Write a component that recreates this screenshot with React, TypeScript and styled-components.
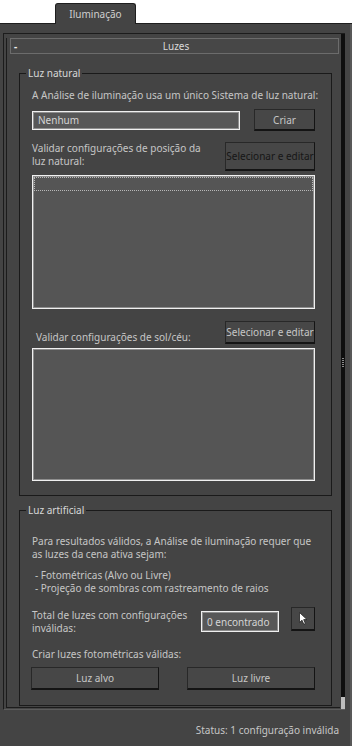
import styled, { createGlobalStyle } from "styled-components";

const GlobalStyle = createGlobalStyle`
  html, body {
    margin: 0;
    padding: 0;
    background: #ffffff;
  }
  body {
    font-family: "Noto Sans", "Liberation Sans", sans-serif;
    font-size: 10px;
    color: #c6c6c6;
  }
  * {
    box-sizing: border-box;
  }
`;

const Page = styled.div`
  width: 352px;
  height: 746px;
  display: flex;
  flex-direction: column;
  overflow: hidden;
`;

const TabStrip = styled.div`
  height: 24px;
  padding: 3px 0 0 55px;
  background: #ffffff;
  border-bottom: 1px solid #1e1e1e;
  display: flex;
`;

const Tab = styled.div`
  width: 81px;
  height: 21px;
  margin-bottom: -1px;
  background: #444444;
  border: 1px solid #1e1e1e;
  border-bottom: none;
  border-radius: 3px 3px 0 0;
  display: flex;
  align-items: center;
  justify-content: center;
  color: #cfcfcf;
`;

const Panel = styled.div`
  flex: 1;
  background: #444444;
  border-right: 2px solid #585858;
  display: flex;
  flex-direction: column;
`;

const RolloutArea = styled.div`
  height: 677px;
  margin: 9px 5px 0 3px;
  border-top: 1px solid #1c1c1c;
  border-left: 1px solid #1c1c1c;
  border-bottom: 1px solid #5c5c5c;
  display: flex;
`;

const RolloutColumn = styled.div`
  flex: 1;
  padding: 4px 1px 1px 2px;
  display: flex;
  flex-direction: column;
`;

const Rollout = styled.div`
  flex: 1;
  border-left: 1px solid #1c1c1c;
  border-bottom: 1px solid #1c1c1c;
  display: flex;
  flex-direction: column;
`;

const RolloutHeader = styled.div`
  height: 16px;
  margin: 0 1px 0 3px;
  background: #474747;
  border: 1px solid #6c6c6c;
  display: grid;
  grid-template-columns: 1fr auto 1fr;
  align-items: center;
  padding-left: 3px;
  color: #dadada;
  line-height: 13px;
`;

const Collapse = styled.span`
  color: #f0f0f0;
  font-weight: bold;
`;

const ScrollStrip = styled.div`
  width: 4px;
  background: #0e0e0e;
  display: flex;
  flex-direction: column;
  align-items: center;
`;

const Grip = styled.div`
  margin-top: 324px;
  width: 2px;
  height: 9px;
  background: repeating-linear-gradient(
    to bottom,
    #8a8a8a 0,
    #8a8a8a 1px,
    transparent 1px,
    transparent 2px
  );
`;

const Thumb = styled.div`
  margin-top: auto;
  width: 4px;
  height: 12px;
  background: #bdbdbd;
`;

const Group = styled.div<{ $top: number; $bottom: number }>`
  margin: ${(p) => p.$top}px 0 0 12px;
  width: 313px;
  border: 1px solid #1a1a1a;
  padding: 0 16px ${(p) => p.$bottom}px 12px;
  display: flex;
  flex-direction: column;
`;

const GroupTitle = styled.div`
  margin: -7px 0 0 -6px;
  padding: 0 2px;
  width: fit-content;
  background: #444444;
  line-height: 13px;
  color: #d8d8d8;
`;

const Text = styled.div<{ $top?: number; $indent?: number; $grow?: boolean }>`
  margin-top: ${(p) => p.$top ?? 0}px;
  padding-left: ${(p) => p.$indent ?? 0}px;
  flex: ${(p) => (p.$grow ? 1 : "none")};
  line-height: 13px;
  white-space: nowrap;
`;

const Row = styled.div<{ $top: number; $align?: string }>`
  margin-top: ${(p) => p.$top}px;
  display: flex;
  align-items: ${(p) => p.$align ?? "center"};
`;

const Field = styled.div<{ $width: number; $height: number; $top?: number }>`
  width: ${(p) => p.$width}px;
  height: ${(p) => p.$height}px;
  margin-top: ${(p) => p.$top ?? 0}px;
  background: #575757;
  border: 1px solid #f0f0f0;
  box-shadow: inset 0 0 0 1px #8e8e8e;
  padding-left: 5px;
  display: flex;
  align-items: center;
  color: #d4d4d4;
`;

const Button = styled.button<{
  $width: number;
  $height: number;
  $dark?: boolean;
  $gap?: number | "auto";
}>`
  width: ${(p) => p.$width}px;
  height: ${(p) => p.$height}px;
  margin: 0 0 0
    ${(p) => (p.$gap === undefined || p.$gap === "auto" ? "auto" : `${p.$gap}px`)};
  padding: 0;
  background: #474747;
  border: 1px solid #282828;
  border-right-color: #141414;
  border-bottom: 2px solid #141414;
  font-family: inherit;
  font-size: 10px;
  color: ${(p) => (p.$dark ? "#161616" : "#c6c6c6")};
  display: flex;
  align-items: center;
  justify-content: center;
  white-space: nowrap;
  overflow: hidden;
`;

const ListBox = styled.div<{ $height: number; $top: number }>`
  margin-top: ${(p) => p.$top}px;
  height: ${(p) => p.$height}px;
  background: #555555;
  border: 1px solid #f0f0f0;
  box-shadow: inset 0 0 0 1px #8e8e8e;
  padding: 1px;
`;

const FocusItem = styled.div`
  height: 14px;
  border: 1px dotted #b8b8b8;
`;

const ButtonPair = styled.div`
  margin: 6px 0 0 -1px;
  display: flex;
  justify-content: space-between;
`;

const StatusBar = styled.div`
  flex: 1;
  display: flex;
  align-items: center;
  justify-content: flex-end;
  padding: 3px 11px 0 0;
  color: #c6c6c6;
`;

function Pointer() {
  return (
    <svg width="9" height="13" viewBox="0 0 9 13">
      <path
        d="M0.5 0.5 L0.5 10.5 L3 8.2 L4.8 12.3 L6.4 11.6 L4.7 7.6 L8 7.6 Z"
        fill="#ffffff"
        stroke="#222222"
        strokeWidth="0.8"
      />
    </svg>
  );
}

export default function App() {
  return (
    <Page>
      <GlobalStyle />
      <TabStrip>
        <Tab>Iluminação</Tab>
      </TabStrip>
      <Panel>
        <RolloutArea>
          <RolloutColumn>
            <Rollout>
              <RolloutHeader>
                <Collapse>-</Collapse>
                <span>Luzes</span>
                <span />
              </RolloutHeader>

              <Group $top={19} $bottom={14}>
                <GroupTitle>Luz natural</GroupTitle>
                <Text $top={9}>
                  A Análise de iluminação usa um único Sistema de luz natural:
                </Text>
                <Row $top={7}>
                  <Field $width={208} $height={19}>
                    Nenhum
                  </Field>
                  <Button $width={61} $height={22}>
                    Criar
                  </Button>
                </Row>
                <Row $top={11} $align="flex-start">
                  <Text>
                    Validar configurações de posição da
                    <br />
                    luz natural:
                  </Text>
                  <Button $width={90} $height={29} $dark>
                    Selecionar e editar
                  </Button>
                </Row>
                <ListBox $top={4} $height={134}>
                  <FocusItem />
                </ListBox>
                <Row $top={12} $align="flex-end">
                  <Text $indent={4}>Validar configurações de sol/céu:</Text>
                  <Button $width={90} $height={23}>
                    Selecionar e editar
                  </Button>
                </Row>
                <ListBox $top={4} $height={133} />
              </Group>

              <Group $top={14} $bottom={15}>
                <GroupTitle>Luz artificial</GroupTitle>
                <Text $top={18}>
                  Para resultados válidos, a Análise de iluminação requer que
                  <br />
                  as luzes da cena ativa sejam:
                </Text>
                <Text $top={8} $indent={3}>
                  - Fotométricas (Alvo ou Livre)
                  <br />- Projeção de sombras com rastreamento de raios
                </Text>
                <Row $top={12} $align="flex-start">
                  <Text $top={2} $grow>
                    Total de luzes com configurações
                    <br />
                    inválidas:
                  </Text>
                  <Field $width={78} $height={21} $top={4}>
                    0 encontrado
                  </Field>
                  <Button $width={24} $height={24} $gap={12}>
                    <Pointer />
                  </Button>
                </Row>
                <Text $top={13}>Criar luzes fotométricas válidas:</Text>
                <ButtonPair>
                  <Button $width={128} $height={23} $gap={0}>
                    Luz alvo
                  </Button>
                  <Button $width={128} $height={23} $gap={0}>
                    Luz livre
                  </Button>
                </ButtonPair>
              </Group>
            </Rollout>
          </RolloutColumn>
          <ScrollStrip>
            <Grip />
            <Thumb />
          </ScrollStrip>
        </RolloutArea>
        <StatusBar>Status: 1 configuração inválida</StatusBar>
      </Panel>
    </Page>
  );
}
